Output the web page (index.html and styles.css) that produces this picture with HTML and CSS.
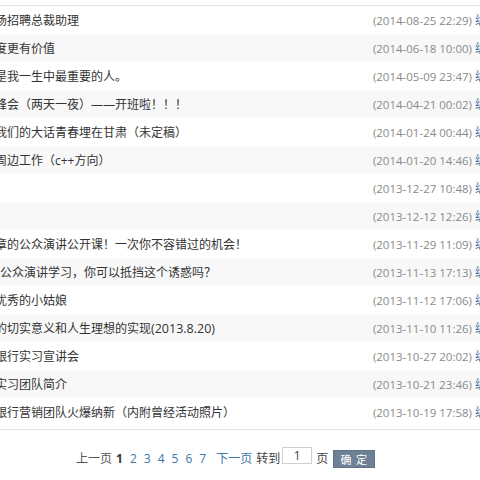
FILE: index.html
```html
<!DOCTYPE html>
<html lang="zh-CN">
<head>
<meta charset="utf-8">
<title>文章列表</title>
<link rel="stylesheet" href="styles.css">
</head>
<body>
<div class="page">
  <ul class="list">
    <li class="row"><span class="title">场招聘总裁助理</span><span class="date">(2014-08-25 22:29)</span><span class="ops"><a>编辑</a> <a>删除</a></span></li>
    <li class="row"><span class="title">度更有价值</span><span class="date">(2014-06-18 10:00)</span><span class="ops"><a>编辑</a> <a>删除</a></span></li>
    <li class="row"><span class="title">是我一生中最重要的人。</span><span class="date">(2014-05-09 23:47)</span><span class="ops"><a>编辑</a> <a>删除</a></span></li>
    <li class="row"><span class="title">峰会（两天一夜）——开班啦！！！</span><span class="date">(2014-04-21 00:02)</span><span class="ops"><a>编辑</a> <a>删除</a></span></li>
    <li class="row"><span class="title">我们的大话青春埋在甘肃（未定稿）</span><span class="date">(2014-01-24 00:44)</span><span class="ops"><a>编辑</a> <a>删除</a></span></li>
    <li class="row"><span class="title">周边工作（c++方向）</span><span class="date">(2014-01-20 14:46)</span><span class="ops"><a>编辑</a> <a>删除</a></span></li>
    <li class="row"><span class="title"></span><span class="date">(2013-12-27 10:48)</span><span class="ops"><a>编辑</a> <a>删除</a></span></li>
    <li class="row"><span class="title"></span><span class="date">(2013-12-12 12:26)</span><span class="ops"><a>编辑</a> <a>删除</a></span></li>
    <li class="row"><span class="title">章的公众演讲公开课！一次你不容错过的机会！</span><span class="date">(2013-11-29 11:09)</span><span class="ops"><a>编辑</a> <a>删除</a></span></li>
    <li class="row"><span class="title shifted">公众演讲学习，你可以抵挡这个诱惑吗？</span><span class="date">(2013-11-13 17:13)</span><span class="ops"><a>编辑</a> <a>删除</a></span></li>
    <li class="row"><span class="title">优秀的小姑娘</span><span class="date">(2013-11-12 17:06)</span><span class="ops"><a>编辑</a> <a>删除</a></span></li>
    <li class="row"><span class="title">的切实意义和人生理想的实现<span class="latin">(2013.8.20)</span></span><span class="date">(2013-11-10 11:26)</span><span class="ops"><a>编辑</a> <a>删除</a></span></li>
    <li class="row"><span class="title">银行实习宣讲会</span><span class="date">(2013-10-27 20:02)</span><span class="ops"><a>编辑</a> <a>删除</a></span></li>
    <li class="row"><span class="title">实习团队简介</span><span class="date">(2013-10-21 23:46)</span><span class="ops"><a>编辑</a> <a>删除</a></span></li>
    <li class="row"><span class="title">银行营销团队火爆纳新（内附曾经活动照片）</span><span class="date">(2013-10-19 17:58)</span><span class="ops"><a>编辑</a> <a>删除</a></span></li>
  </ul>
  <div class="pager">
    <span class="prev">上一页</span>
    <span class="num current">1</span>
    <a class="num">2</a>
    <a class="num">3</a>
    <a class="num">4</a>
    <a class="num">5</a>
    <a class="num">6</a>
    <a class="num last">7</a>
    <a class="next">下一页</a>
    <span class="goto">转到</span>
    <input class="page-input" type="text" value="1">
    <span class="unit">页</span>
    <button class="confirm" type="button">确 定</button>
  </div>
</div>
</body>
</html>
```

FILE: styles.css
```css
html, body {
  margin: 0;
  padding: 0;
  background: #ffffff;
}
body {
  overflow: hidden;
  font-family: "Open Sans", "Noto Sans CJK SC", sans-serif;
  font-size: 12px;
  color: #333333;
}
.page {
  width: 540px;
  margin-left: -5px;
  padding-top: 5px;
}
.list {
  list-style: none;
  margin: 0;
  padding: 0 0 3px 0;
  border-top: 1px solid #e2e2e2;
  border-bottom: 1px solid #e2e2e2;
}
.row {
  display: flex;
  align-items: center;
  height: 28px;
  white-space: nowrap;
}
.row:nth-child(even) {
  background: #f8f8f8;
}
.title {
  flex: 1;
  overflow: hidden;
  color: #333333;
}
.title.shifted {
  text-indent: 5px;
}
.latin {
  font-size: 12.5px;
}
.date {
  color: #8a8a8a;
  font-size: 11.5px;
}
.ops {
  width: 60px;
  margin-left: 3px;
  color: #3b76a8;
}
.ops a {
  color: #3b76a8;
}
.pager {
  display: flex;
  align-items: flex-start;
  margin-top: 17px;
  padding-left: 81px;
  white-space: nowrap;
}
.pager > span,
.pager > a {
  line-height: 18px;
  margin-top: 3px;
}
.prev {
  color: #555555;
  margin-right: 4px;
}
.num {
  margin-right: 7px;
  color: #3b76a8;
}
.num.current {
  color: #333333;
  font-weight: bold;
}
.num.last {
  margin-right: 10px;
}
.next {
  color: #3b76a8;
  margin-right: 4px;
}
.goto {
  color: #444444;
  margin-right: 2px;
}
.page-input {
  box-sizing: border-box;
  width: 30px;
  height: 17px;
  margin: 0 4px 0 0;
  padding: 0;
  border: 1px solid #cfcfcf;
  font-family: "Open Sans", sans-serif;
  font-size: 12px;
  text-align: center;
  color: #444444;
  background: #ffffff;
}
.unit {
  color: #444444;
  margin-right: 5px;
}
.confirm {
  box-sizing: border-box;
  width: 42px;
  height: 18px;
  margin-top: 3px;
  padding: 0;
  border: 1px solid #62748a;
  background: #6e8096;
  color: #ffffff;
  font-family: "Noto Sans CJK SC", sans-serif;
  font-size: 11px;
  line-height: 16px;
  letter-spacing: 1px;
}
```
